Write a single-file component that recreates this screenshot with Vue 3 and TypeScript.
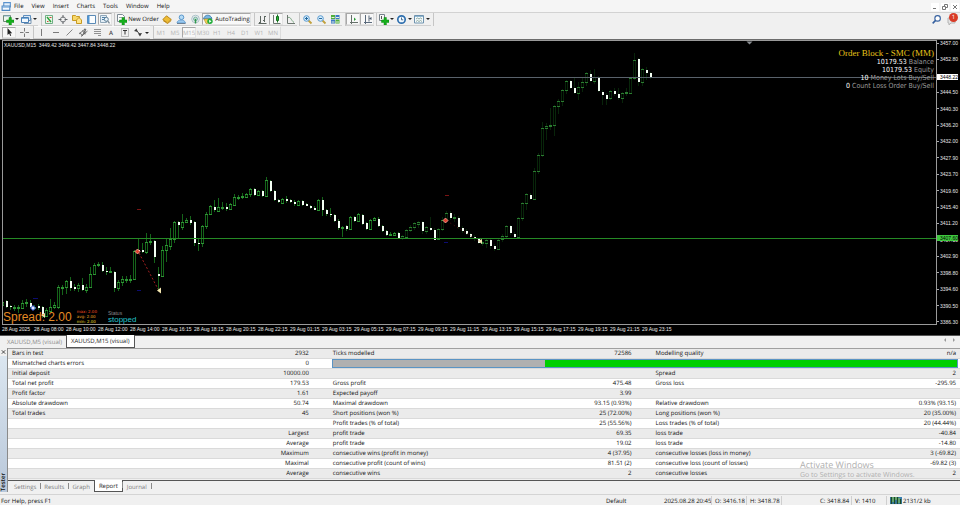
<script setup lang="ts">
interface Tool {
  name: string
  art: string
  size?: 'menu' | 'wide' | 'auto'
  text?: string
  on?: boolean
}
interface Candle {
  x: number
  high: number
  top: number
  bottom: number
  low: number
  down: boolean
  dim: boolean
}

const menus = ['File', 'View', 'Insert', 'Charts', 'Tools', 'Window', 'Help']

const plus = '<path d="M6 3.5h2.4V6H11v2.4H8.4V11H6V8.4H3.5V6H6z" fill="#16b01c" stroke="#0b8413" stroke-width=".5"/>'

const mainTools: Tool[][] = [
  [
    { name: 'New chart', size: 'menu', art: '<path d="M.5 1.5h7v6h-7z" fill="#eef6ee" stroke="#6f8a78"/><path d="M1 2h6" stroke="#8bb0c8"/>' + plus },
    { name: 'Profiles', size: 'menu', art: '<path d="M2.5 1.5h7v5h-7z" fill="#dbe9f6" stroke="#5f8fbe"/><path d="M.5 3.5h7v5h-7z" fill="#f2f8fd" stroke="#4a7fb4"/><path d="M1 4.5h6" stroke="#7db0dc"/><path d="M3 9.5h7V4" fill="none" stroke="#7795b2"/>' },
  ],
  [
    { name: 'Market Watch', art: '<path d="M1.5 1.5h7v8h-7z" fill="#e9f7e9" stroke="#6fae86"/><path d="M3 3l4 5" stroke="#2da13a" stroke-width="1.5"/><path d="M5.5 3.5h2M3 7.5h1.5" stroke="#d24c3c"/>' },
    { name: 'Data Window', art: '<circle cx="5" cy="5.5" r="2.6" fill="none" stroke="#7c8084"/><path d="M5 1v3M5 7v3M.5 5.5h3M6.5 5.5h3" stroke="#606468"/>' },
    { name: 'Navigator', art: '<path d="M.5 3V1.5h3l1 1h3v4h-7z" fill="#f7d768" stroke="#c79a22"/><path d="M4.5 6l2.5-2.5L9.5 6v3.5h-5z" fill="#ffe488" stroke="#c79a22"/>' },
    { name: 'Terminal', art: '<path d="M1.5 1.5h8v8h-8z" fill="#fafdff" stroke="#5a8ab6"/><path d="M2.5 2v7" stroke="#4e95d4" stroke-width="2"/>' },
    { name: 'Strategy Tester', on: true, art: '<path d="M.5 1.5h6v7h-6z" fill="#e3eef6" stroke="#8ea6b8"/><path d="M2 3.5h3M2 5.5h2" stroke="#4d80aa"/><circle cx="6.3" cy="5.3" r="2" fill="#eaf5fc" stroke="#5e7e96"/><path d="M7.7 7L9.5 9.3" stroke="#7b8a96" stroke-width="1.3"/>' },
  ],
  [
    { name: 'New Order', size: 'wide', text: 'New Order', art: '<path d="M1.5 .5h5l2 2v5h-7z" fill="#fdfdfd" stroke="#7d8a94"/><path d="M3 3.5h3" stroke="#9aa"/>' + plus },
    { name: 'MetaEditor', art: '<path d="M.8 5.5L4.5 1.8l4.8 3.7L5.5 9z" fill="#eebc35" stroke="#a8770c" stroke-width=".8"/><path d="M1 6.5l4.5 3 3.8-3" fill="none" stroke="#c58f1c"/>' },
    { name: 'Options', art: '<circle cx="5.5" cy="3.3" r="2.3" fill="#b4dbf6" stroke="#5b97cb"/><path d="M1 9c0-4 8-4 8.5 0z" fill="#9bcaf0" stroke="#5b97cb" stroke-width=".8"/><path d="M1 9.5h8.5" stroke="#6c8094"/>' },
    { name: 'Signals', art: '<circle cx="5.5" cy="5" r="3.8" fill="none" stroke="#a3bdc6" stroke-width=".9"/><circle cx="5.5" cy="5" r="2" fill="#b8dccb" stroke="#6ba6a0" stroke-width=".8"/><path d="M5.5 5v4.5" stroke="#33994b" stroke-width="1.4"/>' },
    { name: 'AutoTrading', size: 'auto', on: true, text: 'AutoTrading', art: '<path d="M.5 5c1-5 7-5 8.5-.5z" fill="#78b6e4" stroke="#3375a6" stroke-width=".8"/><path d="M1 5h7l-1 4-4 .5z" fill="#f0cd58" stroke="#b38b20" stroke-width=".6"/><circle cx="7" cy="7.2" r="2.7" fill="#22ad3a"/><path d="M6.2 5.7v3l2.3-1.5z" fill="#fff"/>' },
  ],
  [
    { name: 'Bar chart', art: '<path d="M3.5 2v7M2 8.5h1.5M7.5 2v6M7.5 2.5H9M6 6.5h1.5M1.5 9.5h8" fill="none" stroke="#5c6660"/>' },
    { name: 'Candlesticks', on: true, art: '<path d="M2.5 1v8.5h7" fill="none" stroke="#6d7670"/><path d="M6.5 .5v8" stroke="#177a22"/><path d="M5.5 2.5h2v4h-2z" fill="#29b336" stroke="#14701e"/>' },
    { name: 'Line chart', art: '<path d="M2.5 1v8.5h7.5" fill="none" stroke="#6d7670"/><path d="M3 3.5c3-1 3 3 6 5" fill="none" stroke="#7ca884"/>' },
  ],
  [
    { name: 'Zoom In', art: '<path d="M6.5 6.5l3 3" stroke="#c1a13d" stroke-width="1.8"/><circle cx="4.5" cy="4.5" r="2.8" fill="#d4ebfb" stroke="#5a9bd0"/><path d="M3 4.5h3M4.5 3v3" stroke="#22699f"/>' },
    { name: 'Zoom Out', art: '<path d="M6.5 6.5l3 3" stroke="#c1a13d" stroke-width="1.8"/><circle cx="4.5" cy="4.5" r="2.8" fill="#d4ebfb" stroke="#5a9bd0"/><path d="M3 4.5h3" stroke="#22699f"/>' },
    { name: 'Tile Windows', art: '<path d="M1 1h4v4H1zM5.5 5.5h4v4h-4z" fill="#4fae3c"/><path d="M5.5 1h4v4h-4zM1 5.5h4v4H1z" fill="#3c78c4"/><path d="M1.5 3.5h3M6 3.5h3M1.5 8h3M6 8h3" stroke="#e5f1e0"/>' },
  ],
  [
    { name: 'Auto Scroll', on: true, art: '<path d="M3.5 1v9M2 8.5h8" fill="none" stroke="#65706a"/><path d="M6 3.5v3.5l2-1.7z" fill="#2a9c36"/>' },
    { name: 'Chart Shift', on: true, art: '<path d="M3.5 1v9M2 8.5h8M7 1.5v6" fill="none" stroke="#5a6a7c"/><path d="M7 4.5L9.5 3v3z" fill="#4a5a6c"/>' },
  ],
  [
    { name: 'Indicators', size: 'menu', art: '<path d="M1.5 .5h5v6h-5z" fill="#f8faf8" stroke="#75808a"/><path d="M3.5 2v3" stroke="#555"/>' + plus },
    { name: 'Periods', size: 'menu', art: '<circle cx="5.5" cy="5.5" r="3.7" fill="#f2f9ff" stroke="#2e6fae" stroke-width="1.7"/><path d="M5.5 3.5v2.3h1.7" fill="none" stroke="#3a6186" stroke-width=".9"/>' },
    { name: 'Templates', size: 'menu', art: '<path d="M.5 1.5h9v7.5h-9z" fill="#f4f9fc" stroke="#6f93ae"/><path d="M1 2.5h8" stroke="#8fb6d2"/><path d="M2 5l1.5-1 1.5 1 1.5-1L8 5M2 7.5l1.5-1 1.5 1 1.5-1L8 7.5" fill="none" stroke="#77998b" stroke-width=".8"/>' },
  ],
]

const lineTools: Tool[][] = [
  [
    { name: 'Cursor', on: true, art: '<path d="M3.5 1v7l1.7-1.5 1 2.5 1-.4-1-2.4h2z" fill="#222"/>' },
    { name: 'Crosshair', art: '<path d="M6.5 1v3.5M6.5 6.5V10M2 5.5h3.5M7.5 5.5H11" stroke="#7a7a7a"/>' },
  ],
  [
    { name: 'Vertical Line', art: '<path d="M5.5 2v7" stroke="#7a7a7a"/>' },
    { name: 'Horizontal Line', art: '<path d="M3 5.5h6" stroke="#7a7a7a"/>' },
    { name: 'Trendline', art: '<path d="M2.5 8.5L8.5 2.5" stroke="#7a7a7a" stroke-width=".9"/>' },
    { name: 'Equidistant Channel', art: '<path d="M1 7l6-5M3 9.5L9.5 4M2 5.5l2 3M4.5 3.5l2 3M7 1.5v6M4 9l4-7" stroke="#555" stroke-width=".8"/>' },
    { name: 'Fibonacci Retracement', art: '<path d="M2 2.5h7M2 4.5h7M2 6.5h7M6 8.5h3" stroke="#777" stroke-width=".8"/>' },
    { name: 'Text', text: 'A', art: '' },
    { name: 'Text Label', art: '<path d="M1.5 1.5h7v8h-7z" fill="none" stroke="#888" stroke-dasharray="1 1"/><path d="M3 3.5h4M5 3.5v4" stroke="#333"/>' },
    { name: 'Arrows', size: 'menu', art: '<path d="M1 4l2.5-2.5L5 5zM5 6.5l4-.5-2 3.5z" fill="#3c3c3c"/><path d="M3 3l4 4.5" stroke="#3c3c3c"/>' },
  ],
]

const periods = ['M1', 'M5', 'M15', 'M30', 'H1', 'H4', 'D1', 'W1', 'MN']

const prices = [
  '3457.00', '3452.80', '3448.70', '3444.50', '3440.30', '3436.20', '3432.00', '3427.90', '3423.70',
  '3419.60', '3415.40', '3411.20', '3407.10', '3402.90', '3398.80', '3394.60', '3390.50', '3386.30',
]

const times = [
  '28 Aug 2025', '28 Aug 08:00', '28 Aug 10:00', '28 Aug 12:00', '28 Aug 14:00', '28 Aug 16:15', '28 Aug 18:15',
  '28 Aug 20:15', '28 Aug 22:15', '29 Aug 01:15', '29 Aug 03:15', '29 Aug 05:15', '29 Aug 07:15', '29 Aug 09:15',
  '29 Aug 11:15', '29 Aug 13:15', '29 Aug 15:15', '29 Aug 17:15', '29 Aug 19:15', '29 Aug 21:15', '29 Aug 23:15',
]

// One bar per entry: high, body top, body bottom, low, and d for a falling bar
const bars = `
298 302 305 307 u,300 301 307 308 d,305 306 307 310 d,305 307 308 311 u,305 307 308 313 u,300 303 308 309 u,
299 302 303 307 u,300 303 307 308 d,305 307 308 310 u,304 306 308 310 d,306 307 316 318 d,308 310 316 317 u,
299 307 311 313 u,302 305 307 309 u,285 287 307 309 u,285 287 288 295 u,280 281 287 294 u,277 281 288 291 d,
284 287 289 291 d,283 285 288 292 u,278 285 290 291 d,284 287 290 293 u,267 274 287 288 u,263 265 274 275 u,
262 264 265 267 u,262 265 271 272 d,267 271 272 275 d,267 271 272 273 u,271 272 288 292 d,280 282 288 291 u,
276 279 282 286 u,276 279 280 283 u,275 279 280 283 u,250 251 279 280 u,238 250 251 253 d,243 250 252 253 d,
233 242 252 254 u,234 241 242 245 u,240 241 257 263 d,267 274 276 290 d,246 250 276 277 u,238 245 250 262 u,
228 239 246 250 u,221 222 239 243 u,221 222 225 238 d,214 222 227 230 u,218 220 222 223 u,216 220 223 225 d,
221 222 243 246 d,238 243 244 251 d,225 226 243 247 u,212 214 226 229 u,205 206 214 215 u,200 207 210 212 d,
198 207 211 212 u,202 207 208 210 u,203 207 209 211 d,203 204 209 210 u,194 197 205 206 u,195 197 198 200 u,
193 196 197 199 u,193 194 197 198 u,188 189 194 197 u,188 189 195 196 d,190 191 195 196 u,190 191 196 197 d,
177 180 196 197 u,180 181 191 192 d,190 191 200 201 d,199 200 202 203 d,198 199 203 204 u,196 199 201 203 d,
199 200 202 203 d,200 202 204 206 d,200 201 205 206 u,200 201 205 206 d,203 204 206 206 d,205 206 208 209 d,
206 208 210 210 d,199 200 210 210 u,197 200 210 216 d,209 210 214 216 d,208 214 215 217 d,214 215 221 222 d,
219 221 228 230 d,226 227 228 237 u,225 226 229 231 d,216 217 229 230 u,216 217 221 222 d,213 214 221 222 u,
214 215 224 225 d,222 223 229 230 d,219 220 229 230 u,217 218 220 221 u,217 219 226 227 d,225 226 231 232 d,
230 231 235 236 d,232 234 235 236 u,232 233 235 236 u,232 233 238 239 d,235 236 238 240 u,229 230 237 238 u,
225 227 230 232 u,222 223 227 230 u,221 222 224 228 u,221 222 231 234 d,226 227 231 234 u,217 228 230 231 d,
228 230 240 240 d,228 229 239 240 u,217 220 229 231 u,211 213 220 222 u,211 213 218 220 d,214 217 218 222 u,
216 218 227 229 d,226 228 231 233 d,229 231 234 235 d,233 234 237 239 d,235 237 239 241 d,238 239 243 244 d,
241 242 243 246 u,239 240 243 248 u,238 240 246 249 d,244 246 249 251 d,238 240 249 250 u,234 236 239 242 u,
225 226 236 238 u,225 226 233 235 d,232 234 237 238 d,217 218 237 238 u,202 203 218 221 u,193 194 203 210 u,
193 195 199 200 d,168 171 199 200 u,153 155 171 174 u,122 128 155 157 u,123 126 128 140 u,108 125 126 130 u,
105 106 125 136 u,99 101 106 114 u,89 90 101 106 u,80 81 90 94 u,80 81 88 89 d,77 88 93 94 d,
82 87 93 100 u,78 82 87 92 u,72 73 82 86 u,70 74 81 82 d,69 77 81 84 u,76 77 91 92 d,
90 92 95 105 d,93 95 99 105 d,90 91 98 100 u,88 91 94 96 d,88 94 98 100 d,92 93 98 103 u,
88 92 93 96 u,77 78 93 94 u,53 60 78 80 u,58 59 82 86 d,68 69 82 86 u,67 70 73 80 d,72 73 78 79 d`

const candles: Candle[] = bars
  .trim()
  .split(',')
  .map((entry, i) => {
    const [high, top, bottom, low, way] = entry.trim().split(' ')
    return { x: 2 + 4 * i, high: +high, top: +top, bottom: +bottom, low: +low, down: way === 'd', dim: i > 99 }
  })

const report: string[][] = [
  ['Bars in test', '2932', 'Ticks modelled', '72586', 'Modelling quality', 'n/a'],
  ['Mismatched charts errors', '0'],
  ['Initial deposit', '10000.00', '', '', 'Spread', '2'],
  ['Total net profit', '179.53', 'Gross profit', '475.48', 'Gross loss', '-295.95'],
  ['Profit factor', '1.61', 'Expected payoff', '3.99', '', ''],
  ['Absolute drawdown', '50.74', 'Maximal drawdown', '93.15 (0.93%)', 'Relative drawdown', '0.93% (93.15)'],
  ['Total trades', '45', 'Short positions (won %)', '25 (72.00%)', 'Long positions (won %)', '20 (35.00%)'],
  ['', '', 'Profit trades (% of total)', '25 (55.56%)', 'Loss trades (% of total)', '20 (44.44%)'],
  ['', 'Largest', 'profit trade', '69.35', 'loss trade', '-40.84'],
  ['', 'Average', 'profit trade', '19.02', 'loss trade', '-14.80'],
  ['', 'Maximum', 'consecutive wins (profit in money)', '4 (37.95)', 'consecutive losses (loss in money)', '3 (-69.82)'],
  ['', 'Maximal', 'consecutive profit (count of wins)', '81.51 (2)', 'consecutive loss (count of losses)', '-69.82 (3)'],
  ['', 'Average', 'consecutive wins', '2', 'consecutive losses', '2'],
]

const testerTabs = ['Settings', 'Results', 'Graph', 'Report', 'Journal']
</script>

<template>
  <div class="terminal">
    <header class="menubar">
      <svg class="icon" viewBox="0 0 10 10">
        <path d="M2.5 1.5h6v4h-6z" fill="#e4f0fb" stroke="#5b93cd" />
        <path d="M1 4.5h7v4H1z" fill="#f5faff" stroke="#4d86c1" />
        <path d="M1 5.5h7" stroke="#6aa2d8" />
      </svg>
      <nav class="menus">
        <button v-for="m in menus" :key="m" type="button">{{ m }}</button>
      </nav>
      <div class="window-buttons">
        <button type="button" aria-label="Minimize"><svg viewBox="0 0 8 8"><path d="M2 5.5h3" stroke="#777" /></svg></button>
        <button type="button" aria-label="Restore"><svg viewBox="0 0 8 8"><path d="M3.5 3V1.5h3v3H5M1.5 3.5h3v3h-3z" fill="none" stroke="#777" /></svg></button>
        <button type="button" aria-label="Close"><svg viewBox="0 0 8 8"><path d="M2 2l4 4M6 2L2 6" stroke="#777" /></svg></button>
      </div>
    </header>

    <div class="toolbar main-bar">
      <template v-for="(group, g) in mainTools" :key="g">
        <div class="group">
          <button v-for="t in group" :key="t.name" type="button" :aria-label="t.name" :class="[t.size, { on: t.on }]">
            <svg class="icon" viewBox="0 0 11 11" v-html="t.art"></svg>
            <span v-if="t.text">{{ t.text }}</span>
            <i v-if="t.size === 'menu'" class="drop"></i>
          </button>
        </div>
        <span class="sep" :class="{ roomy: g === 0 || g === 2 || g === 4 }"></span>
      </template>
      <div class="right-tools">
        <button type="button" aria-label="Search">
          <svg class="icon" viewBox="0 0 10 10">
            <circle cx="6" cy="4" r="2.5" fill="#fff" stroke="#35609f" />
            <path d="M4.2 5.8L1.5 8.5" stroke="#35609f" stroke-width="1.4" />
          </svg>
        </button>
        <button type="button" class="bell" aria-label="Notifications">
          <svg class="bubble" viewBox="0 0 12 12"><path d="M1 4h7v5H4l-2 2V9H1z" fill="#e3e3e3" stroke="#b5b5b5" /></svg>
          <span class="count">1</span>
        </button>
      </div>
    </div>

    <div class="toolbar line-bar">
      <template v-for="(group, g) in lineTools" :key="g">
        <div class="group">
          <button v-for="t in group" :key="t.name" type="button" :aria-label="t.name" :class="[t.size, { on: t.on }]">
            <svg v-if="t.art" class="icon" viewBox="0 0 11 11" v-html="t.art"></svg>
            <span v-if="t.text" class="letter">{{ t.text }}</span>
            <i v-if="t.size === 'menu'" class="drop"></i>
          </button>
        </div>
        <span class="sep roomy"></span>
      </template>
      <div class="group periods">
        <button v-for="p in periods" :key="p" type="button" :class="{ on: p === 'M15' }">{{ p }}</button>
      </div>
    </div>

    <section class="chart">
      <div class="plot">
        <svg class="canvas" role="img" aria-label="XAUUSD candlestick chart">
          <g transform="translate(-3 -41)">
            <g v-for="c in candles" :key="c.x" :class="{ dim: c.dim }">
              <rect class="wick" :x="c.x" :y="c.high" width="1" :height="c.low - c.high" />
              <rect v-if="c.down" class="fall" :x="c.x" :y="c.top" width="2" :height="c.bottom - c.top" />
              <template v-else>
                <rect class="side" :x="c.x - 1" :y="c.top" width="3" :height="c.bottom - c.top + 1" />
                <rect class="hole" :x="c.x" :y="c.top + 1" width="1" :height="Math.max(0, c.bottom - c.top - 1)" />
                <rect class="edge" :x="c.x - 1" :y="c.top" width="3" height="1" />
                <rect class="edge" :x="c.x - 1" :y="c.bottom" width="3" height="1" />
              </template>
            </g>
            <path d="M139 253L158 289" stroke="#a32020" stroke-dasharray="2 2" />
            <path d="M447 221L479 241" stroke="#5a1414" stroke-dasharray="1 3" />
            <path d="M137 209.5h4M445 195.5h4" stroke="#7a1414" />
            <path d="M33 298.5h5M137 290.5h4M444 242.5h4" stroke="#0c0c70" />
            <path d="M137.5 249l2.5 2.5-2.5 2.5-2.5-2.5zM445.5 218l2.5 2.5-2.5 2.5-2.5-2.5z" fill="#e0402f" stroke="#f5a79c" stroke-width=".8" />
            <path d="M33 305.5l2.5 2.5-2.5 2.5-2.5-2.5z" fill="#dfe7ff" stroke="#2b4cd8" />
            <path d="M157 290.5l4-3v6zM478 241l4-2v5zM41 315l4-2v5z" fill="#f4e7b0" />
            <path d="M746.5 41.5h6l-3 3z" fill="#8b8f93" />
          </g>
          <line x1="0" x2="100%" y1="36.5" y2="36.5" stroke="#59626b" />
          <line x1="0" x2="100%" y1="197.5" y2="197.5" stroke="#258a25" />
        </svg>
        <p class="quote">XAUUSD,M15&nbsp; 3449.42 3449.42 3447.84 3448.22</p>
        <div class="account">
          <h1>Order Block - SMC (MM)</h1>
          <p><b>10179.53</b> Balance</p>
          <p><b>10179.53</b> Equity</p>
          <p><b>10</b> Money Lots Buy/Sell</p>
          <p><b>0</b> Count Loss Order Buy/Sell</p>
        </div>
        <div class="spread">
          <span class="now">Spread: 2.00</span>
          <span class="stats"><i class="max">max: 2.00</i><i class="avg">avg: 2.00</i><i class="min">min: 2.00</i></span>
          <span class="status"><i>Status</i><b>stopped</b></span>
        </div>
      </div>
      <div class="price-axis">
        <span v-for="p in prices" :key="p">{{ p }}</span>
        <b class="bid">3448.22</b>
        <b class="level">3407.60</b>
      </div>
      <div class="time-axis">
        <span v-for="t in times" :key="t">{{ t }}</span>
      </div>
    </section>

    <nav class="chart-tabs">
      <button type="button">XAUUSD,M5 (visual)</button>
      <button type="button" class="active">XAUUSD,M15 (visual)</button>
      <span class="arrows"><i class="prev"></i><i class="next"></i></span>
    </nav>

    <section class="tester">
      <aside>
        <button type="button" aria-label="Close tester"><svg viewBox="0 0 8 8"><path d="M2 2l4 4M6 2L2 6" stroke="#333" /></svg></button>
        <div class="grip"><span>Tester</span></div>
      </aside>
      <div class="pane">
        <table>
          <colgroup><col class="first" /><col class="value" /><col class="label" /><col class="value" /><col class="label" /><col class="last" /></colgroup>
          <tbody>
            <tr v-for="(row, r) in report" :key="r">
              <td v-for="(cell, c) in row" :key="c" :class="{ num: c % 2 === 1, end: c === 5 }">{{ cell }}</td>
              <td v-if="row.length === 2" colspan="4" class="progress"><div class="track"><div class="done"></div></div></td>
            </tr>
          </tbody>
        </table>
        <nav class="tester-tabs">
          <button v-for="t in testerTabs" :key="t" type="button" :class="{ active: t === 'Report' }">{{ t }}</button>
        </nav>
        <div class="watermark">
          <strong>Activate Windows</strong>
          <span>Go to Settings to activate Windows.</span>
        </div>
      </div>
    </section>

    <footer class="statusbar">
      <span class="help">For Help, press F1</span>
      <span class="profile">Default</span>
      <span class="date">2025.08.28 20:45</span>
      <span class="ohlc">O: 3416.18</span>
      <span class="ohlc">H: 3418.78</span>
      <span class="ohlc"></span>
      <span class="ohlc open">C: 3418.84</span>
      <span class="ohlc">V: 1410</span>
      <span class="net">
        <svg viewBox="0 0 12 7"><path d="M0 0h12v7H0z" fill="#3a7fb0" /><path d="M1.5 0v7M4.5 0v7M7.5 0v7M10.5 2v5" stroke="#1d4a26" stroke-width="1.4" /><path d="M3 0v5M6 0v3M9 1v5" stroke="#8fd14a" /></svg>
        2131/2 kb
      </span>
    </footer>
  </div>
</template>

<style>
body {
  margin: 0;
  background: #f0f0f0;
}
</style>

<style scoped>
.terminal {
  display: flex;
  flex-direction: column;
  background: #f0f0f0;
  color: #101010;
  font: 6px/10px "Open Sans", "Noto Sans", sans-serif;
  text-rendering: geometricPrecision;
  overflow: hidden;
}
button {
  display: flex;
  align-items: center;
  justify-content: center;
  box-sizing: border-box;
  margin: 0;
  padding: 0;
  border: 0;
  background: none;
  color: inherit;
  font: inherit;
  text-rendering: inherit;
  white-space: nowrap;
}
p, h1 { margin: 0; }
i { font-style: normal; }
.icon { width: 11px; height: 11px; flex: none; }

.menubar {
  display: flex;
  align-items: center;
  height: 12px;
  padding-left: 1px;
  background: #f5f5f5;
}
.menus { display: flex; flex: 1; gap: 8px; padding-left: 2px; }
.window-buttons { display: flex; gap: 2px; padding: 2px 1px 0 0; }
.window-buttons button { background: #fff; }
.window-buttons svg { width: 8px; height: 8px; }

.toolbar { display: flex; align-items: stretch; padding-left: 2px; box-sizing: border-box; }
.main-bar { height: 14px; border-top: 1px solid #d2d2d2; }
.line-bar { height: 13px; }
.group { display: flex; border-bottom: 1px solid #d0d0d0; }
.line-bar .group { border-top: 1px solid #fbfbfb; }
.toolbar .group button { width: 14px; gap: 1px; }
.toolbar .group .menu { width: 18px; }
.toolbar .group .wide { width: 45px; }
.toolbar .group .auto { width: 49px; }
.toolbar .group .on {
  background: #f8f8f8;
  border: 1px solid;
  border-color: #a8a8a8 #e2e2e2 #e2e2e2 #a8a8a8;
}
.drop { border: 2px solid transparent; border-top-color: #222; border-bottom: 0; }
.sep { width: 3px; box-sizing: border-box; border-right: 1px solid #c6c6c6; }
.sep.roomy { width: 4px; }
.letter { color: #444; font-weight: 600; }
.periods { color: #b4b4b4; border-right: 1px solid #dcdcdc; }
.right-tools { display: flex; gap: 4px; margin-left: auto; padding-right: 1px; }
.bell { position: relative; width: 13px; }
.bubble { width: 12px; height: 12px; }
.count {
  position: absolute;
  top: 0;
  right: 1px;
  width: 9px;
  height: 9px;
  border-radius: 50%;
  background: #d83a26;
  color: #fff;
  line-height: 9px;
}

.chart {
  display: grid;
  grid-template-columns: 1fr 22px;
  padding: 0 1px 0 2px;
  border-top: 1px solid #6c6c6c;
  background: #000;
  color: #e8e8e8;
  font: 5px/6px "Liberation Sans", sans-serif;
  text-rendering: auto;
}
.plot { position: relative; border: 1px solid #9a9a9a; }
.canvas { display: block; width: 100%; height: 283px; }
.wick { fill: #15641a; }
.side { fill: #15641a; }
.edge { fill: #2d9434; }
.hole { fill: #000; }
.fall { fill: #f4fff4; }
.dim .wick { fill: #08240a; }
.dim .side { fill: #08260a; }
.dim .edge { fill: #2a7c30; }
.quote { position: absolute; top: 1px; left: 1px; white-space: nowrap; }
.account {
  position: absolute;
  top: 7px;
  right: 2px;
  color: #9a9a9a;
  font: 7px/8px "DejaVu Sans Condensed", "DejaVu Sans", sans-serif;
  text-align: right;
}
.account h1 { color: #e6c419; font: 9px/10px "Liberation Serif", serif; }
.account b { color: #fff; font-weight: 400; }
.spread { position: absolute; left: 0; bottom: 0; display: flex; align-items: center; gap: 5px; }
.now { color: #e58b24; font-size: 12px; line-height: 14px; }
.stats, .status { display: flex; flex-direction: column; }
.stats i { font: 4px/5px "DejaVu Sans", sans-serif; }
.max { color: #f04a20; }
.avg { color: #f0a020; }
.min { color: #e8d824; }
.status { margin-left: 6px; color: #8a8a8a; }
.status b { color: #22c4cc; font: 8px/8px "Liberation Sans", sans-serif; }
.price-axis { position: relative; display: flex; flex-direction: column; justify-content: space-between; }
.price-axis span { display: flex; align-items: center; gap: 1px; }
.price-axis span::before { content: ""; width: 2px; height: 1px; background: #aaa; }
.price-axis b { position: absolute; left: 0; right: 1px; padding-left: 3px; font-weight: 400; color: #000; }
.bid { top: 34px; background: #fff; }
.level { top: 195px; background: #3fc93f; }
.time-axis { grid-column: 1 / -1; display: flex; height: 10px; }
.time-axis span { flex: none; width: 32px; line-height: 9px; white-space: nowrap; }

.chart-tabs {
  display: flex;
  height: 12px;
  padding-left: 3px;
  border-top: 1px solid #555;
  color: #8a8a8a;
}
.chart-tabs button { padding: 0 4px; }
.chart-tabs .active {
  margin-top: -1px;
  border: 1px solid #555;
  border-top: 0;
  background: #fff;
  color: #1c1c1c;
}
.arrows { display: flex; align-items: center; gap: 7px; margin-left: auto; padding: 0 5px 4px 0; }
.arrows i { border: 2px solid transparent; }
.arrows .prev { border-left: 0; border-right-color: #999; }
.arrows .next { border-right: 0; border-left-color: #999; }

.tester { display: flex; }
aside { display: flex; flex-direction: column; width: 8px; box-sizing: border-box; border-right: 1px solid #8a8a8a; }
aside svg { width: 7px; height: 8px; }
.grip {
  display: flex;
  flex: 1;
  align-items: flex-end;
  justify-content: center;
  background: linear-gradient(#dbe6f0, #b9c8da);
}
.grip span { padding-top: 1px; writing-mode: vertical-rl; transform: rotate(180deg); font-weight: 600; line-height: 7px; }
.pane { position: relative; flex: 1; }
table {
  width: 100%;
  table-layout: fixed;
  border-collapse: collapse;
  border-top: 1px solid #a0a0a0;
  background: #fff;
}
col.first { width: 20.7%; }
col.label { width: 20.9%; }
col.value { width: 13%; }
tr:nth-child(odd) { background: #ebebeb; }
td { height: 9px; padding: 0 0 0 4px; border-bottom: 1px solid #dadada; line-height: 9px; white-space: nowrap; }
td.num { padding-right: 20px; text-align: right; }
td.end { padding-right: 4px; }
td.progress { padding: 0 2px 0 3px; }
.track { height: 7px; border: 1px solid #5b94c4; background: #b0b0b0; }
.done { width: 66%; height: 7px; margin-left: auto; background: #00cf00; }
.tester-tabs {
  display: flex;
  height: 11px;
  margin-top: 1px;
  padding-left: 2px;
  border-top: 1px solid #555;
  color: #7c7c7c;
}
.tester-tabs button { position: relative; padding: 0 4px; }
.tester-tabs button::after {
  content: "";
  position: absolute;
  top: 2px;
  right: -1px;
  width: 1px;
  height: 6px;
  background: #8a8a8a;
}
.tester-tabs .active {
  z-index: 1;
  margin-top: -1px;
  border: 1px solid #555;
  border-top: 0;
  background: #fff;
  color: #1c1c1c;
}
.watermark { position: absolute; top: 110px; left: 792px; color: #b0b0b0; font: 7px/10px "Open Sans", sans-serif; }
.watermark strong { display: block; font-size: 9px; font-weight: 400; line-height: 13px; }

.statusbar {
  display: flex;
  align-items: center;
  height: 11px;
  margin-top: 2px;
  padding-left: 1px;
  border-top: 1px solid #d4d4d4;
}
.statusbar span { box-sizing: border-box; white-space: nowrap; }
.help { flex: 1; }
.statusbar .profile { width: 58px; padding-left: 3px; }
.statusbar .date { width: 50px; padding-left: 3px; }
.statusbar .ohlc { width: 35px; height: 10px; padding-left: 3px; border-left: 1px solid #cfcfcf; }
.statusbar .open { border-color: transparent; }
.statusbar .net { display: flex; align-items: center; gap: 1px; width: 74px; padding-left: 3px; border-left: 1px solid #cfcfcf; }
.net svg { width: 12px; height: 7px; }
</style>
